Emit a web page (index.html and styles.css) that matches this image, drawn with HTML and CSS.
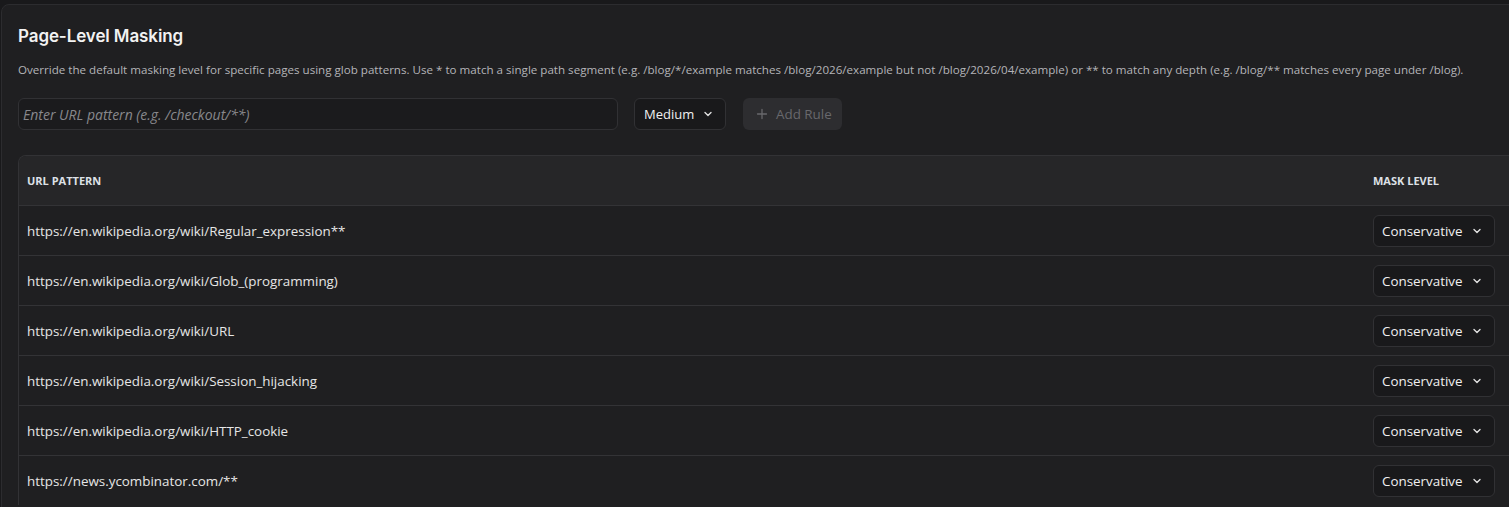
FILE: index.html
```html
<!DOCTYPE html>
<html>
<head>
    <meta charset="UTF-8">
    <title>Page-Level Masking</title>
    <link rel="stylesheet" href="styles.css">
</head>
<body>
    <div class="card">
        <h2>Page-Level Masking</h2>
        <p class="desc">Override the default masking level for specific pages using glob patterns. Use * to match a single path segment (e.g. /blog/*/example matches /blog/2026/example but not /blog/2026/04/example) or ** to match any depth (e.g. /blog/** matches every page under /blog).</p>

        <div class="add-row">
            <input type="text" class="url-input" placeholder="Enter URL pattern (e.g. /checkout/**)">
            <div class="select">
                Medium
                <svg width="10" height="10" viewBox="0 0 10 10"><path d="M2 3.5 L5 6.5 L8 3.5" fill="none" stroke="currentColor" stroke-width="1.4" stroke-linecap="round" stroke-linejoin="round"/></svg>
            </div>
            <button class="add-btn" disabled>
                <svg width="12" height="12" viewBox="0 0 12 12"><path d="M6 1.5 V10.5 M1.5 6 H10.5" stroke="currentColor" stroke-width="1.3" stroke-linecap="round"/></svg>
                Add Rule
            </button>
        </div>

        <div class="table">
            <div class="row head">
                <div class="cell">URL Pattern</div>
                <div class="cell level">Mask Level</div>
            </div>
            <div class="row">
                <div class="cell">https://en.wikipedia.org/wiki/Regular_expression**</div>
                <div class="cell level"><div class="select small">Conservative <svg width="10" height="10" viewBox="0 0 10 10"><path d="M2 3.5 L5 6.5 L8 3.5" fill="none" stroke="currentColor" stroke-width="1.4" stroke-linecap="round" stroke-linejoin="round"/></svg></div></div>
            </div>
            <div class="row">
                <div class="cell">https://en.wikipedia.org/wiki/Glob_(programming)</div>
                <div class="cell level"><div class="select small">Conservative <svg width="10" height="10" viewBox="0 0 10 10"><path d="M2 3.5 L5 6.5 L8 3.5" fill="none" stroke="currentColor" stroke-width="1.4" stroke-linecap="round" stroke-linejoin="round"/></svg></div></div>
            </div>
            <div class="row">
                <div class="cell">https://en.wikipedia.org/wiki/URL</div>
                <div class="cell level"><div class="select small">Conservative <svg width="10" height="10" viewBox="0 0 10 10"><path d="M2 3.5 L5 6.5 L8 3.5" fill="none" stroke="currentColor" stroke-width="1.4" stroke-linecap="round" stroke-linejoin="round"/></svg></div></div>
            </div>
            <div class="row">
                <div class="cell">https://en.wikipedia.org/wiki/Session_hijacking</div>
                <div class="cell level"><div class="select small">Conservative <svg width="10" height="10" viewBox="0 0 10 10"><path d="M2 3.5 L5 6.5 L8 3.5" fill="none" stroke="currentColor" stroke-width="1.4" stroke-linecap="round" stroke-linejoin="round"/></svg></div></div>
            </div>
            <div class="row">
                <div class="cell">https://en.wikipedia.org/wiki/HTTP_cookie</div>
                <div class="cell level"><div class="select small">Conservative <svg width="10" height="10" viewBox="0 0 10 10"><path d="M2 3.5 L5 6.5 L8 3.5" fill="none" stroke="currentColor" stroke-width="1.4" stroke-linecap="round" stroke-linejoin="round"/></svg></div></div>
            </div>
            <div class="row">
                <div class="cell">https://news.ycombinator.com/**</div>
                <div class="cell level"><div class="select small">Conservative <svg width="10" height="10" viewBox="0 0 10 10"><path d="M2 3.5 L5 6.5 L8 3.5" fill="none" stroke="currentColor" stroke-width="1.4" stroke-linecap="round" stroke-linejoin="round"/></svg></div></div>
            </div>
        </div>
    </div>
</body>
</html>
```

FILE: styles.css
```css
body {
    font-family: "Open Sans", Arial, sans-serif;
    background-color: #19191b;
    color: #e6e6e6;
    margin: 0;
    padding: 4px 0 0 1px;
    overflow: hidden;
}

.card {
    width: 1560px;
    background-color: #1f1f21;
    border: 1px solid #2c2c2f;
    border-radius: 8px;
    padding: 17px 16px 40px 16px;
}

h2 {
    font-family: Inter, sans-serif;
    font-size: 17px;
    font-weight: 600;
    color: #f2f2f2;
    margin: 4px 0 0 0;
    line-height: 20px;
    letter-spacing: -0.1px;
}

.desc {
    font-size: 11.6px;
    color: #b4b4b8;
    margin: 16px 0 0 0;
    line-height: 16px;
}

.add-row {
    display: flex;
    align-items: center;
    gap: 16px;
    margin-top: 20px;
}

.url-input {
    width: 600px;
    height: 32px;
    box-sizing: border-box;
    background-color: #1b1b1d;
    border: 1px solid #313134;
    border-radius: 6px;
    padding: 0 4px;
    font-family: "Open Sans", sans-serif;
    font-size: 14px;
    color: #e6e6e6;
    outline: none;
}

.url-input::placeholder {
    color: #88888c;
    font-style: italic;
}

.select {
    display: flex;
    align-items: center;
    justify-content: space-between;
    gap: 8px;
    height: 32px;
    box-sizing: border-box;
    width: 92px;
    padding: 0 12px 0 9px;
    background-color: #19191b;
    border: 1px solid #313134;
    border-radius: 6px;
    font-size: 13px;
    color: #f0f0f0;
}

.select svg {
    color: #e0e0e0;
}

.select.small {
    width: 122px;
    padding: 0 12px 0 8px;
    font-size: 13.4px;
}

.add-btn {
    display: flex;
    align-items: center;
    gap: 8px;
    height: 32px;
    width: 99px;
    margin-left: 1px;
    padding: 0 0 0 13px;
    background-color: #2d2d30;
    border: none;
    border-radius: 6px;
    font-family: "Open Sans", sans-serif;
    font-size: 13.4px;
    color: #68686c;
    white-space: nowrap;
}

.table {
    margin-top: 25px;
    border: 1px solid #323235;
    border-bottom: none;
    border-radius: 8px 8px 0 0;
    overflow: hidden;
}

.row {
    display: flex;
    align-items: center;
    height: 49px;
    border-top: 1px solid #333336;
}

.row.head {
    border-top: none;
    height: 49px;
    background-color: #262628;
    font-weight: 700;
    text-transform: uppercase;
    color: #dde0e6;
}

.cell {
    flex: 1;
    padding: 0 8px;
    font-size: 13.4px;
}

.row.head .cell {
    font-size: 11px;
}

.cell.level {
    flex: 0 0 196px;
}
```
